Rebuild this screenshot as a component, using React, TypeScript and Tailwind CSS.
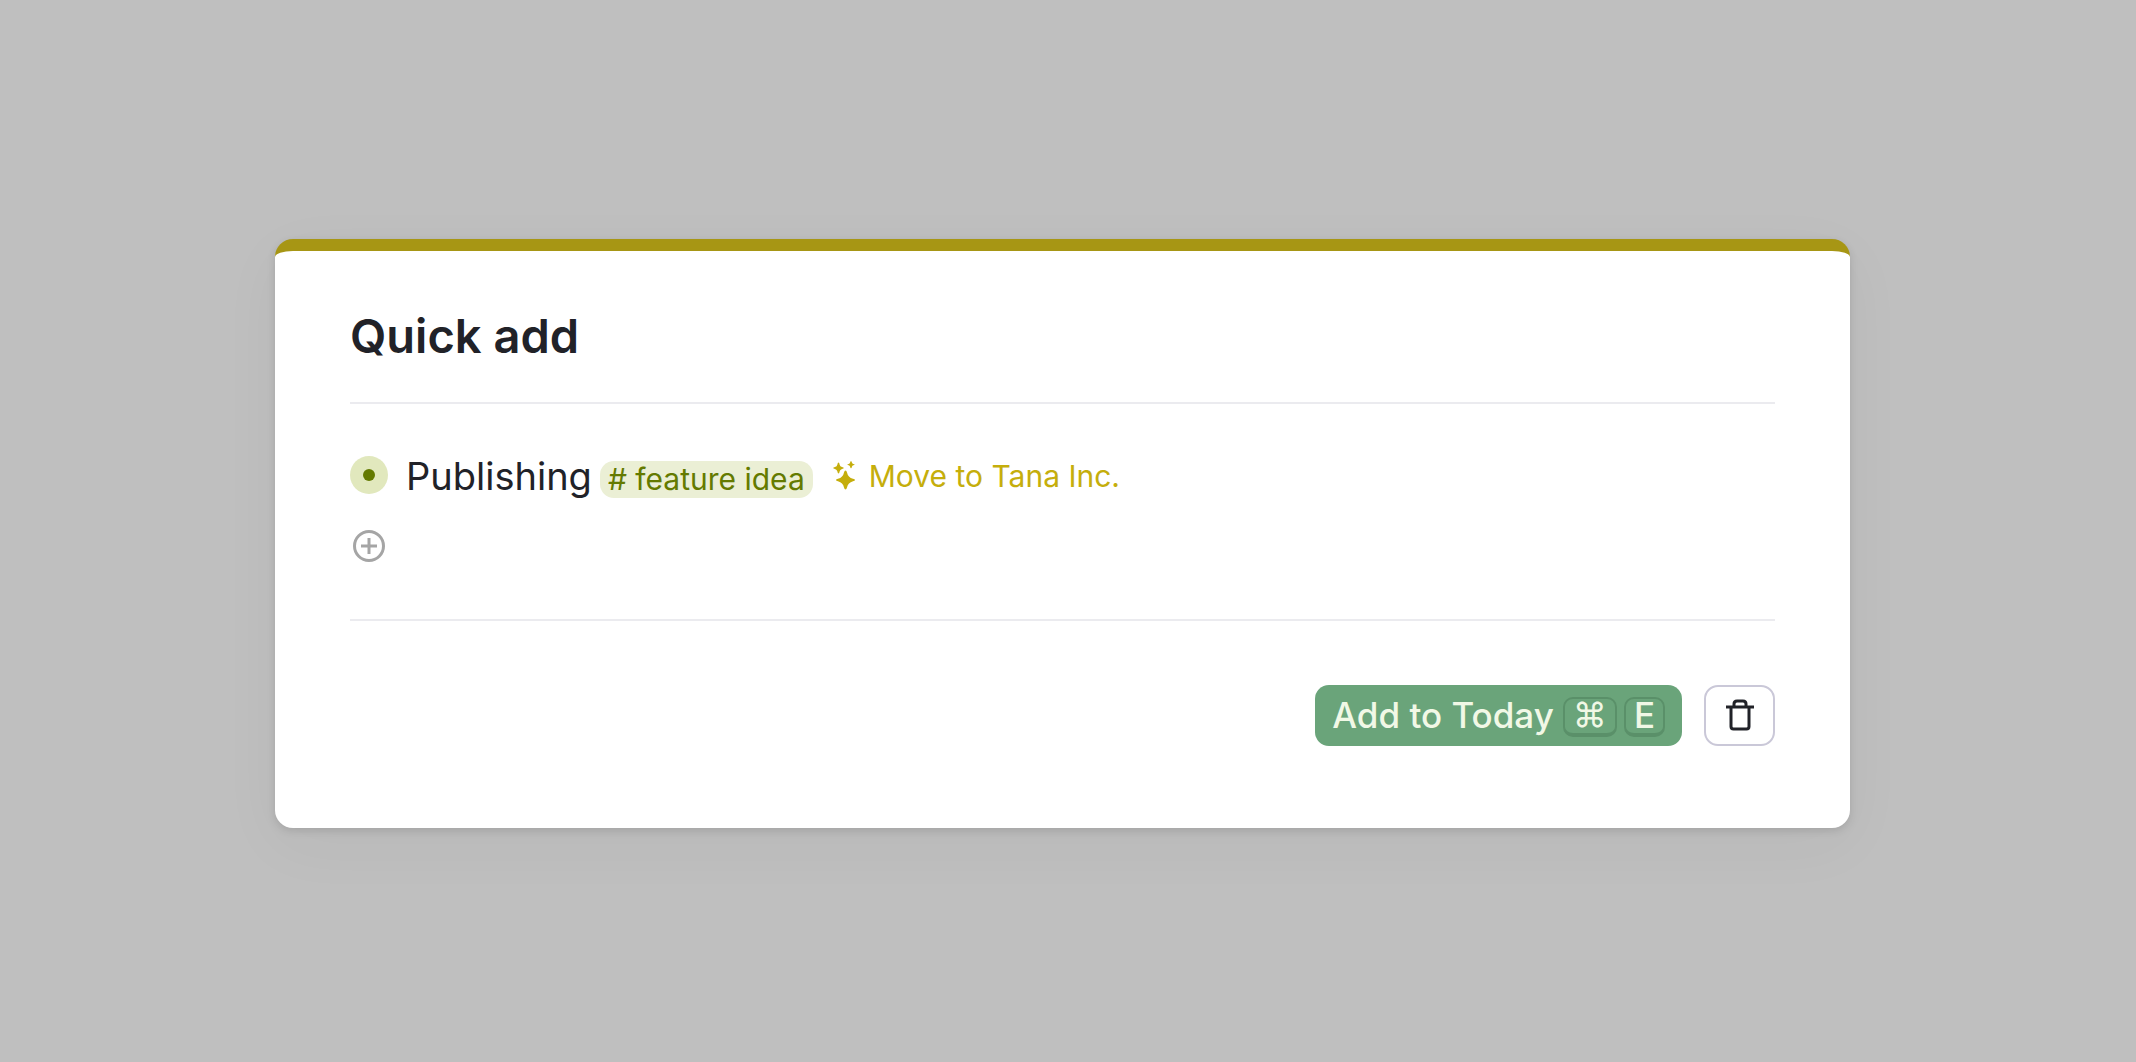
import React from "react";

function SparklesIcon() {
  return (
    <svg width="24" height="30" viewBox="0 0 24 30" fill="currentColor" aria-hidden="true">
      <path d="M12.500 9.500Q13.500 9.500 14 11.500Q15 16.500 20 17.800Q22 18.200 22 19Q22 19.800 20 20.200Q15 21.500 14 26.500Q13.500 28.500 12.500 28.500Q11.500 28.500 11 26.500Q10 21.500 5 20.200Q3 19.800 3 19Q3 18.200 5 17.800Q10 16.500 11 11.500Q11.500 9.500 12.500 9.500Z" />
      <path d="M5.500 1.500Q6.300 1.500 6.600 3.500Q7 5.600 9 6.100Q10.800 6.400 10.800 7Q10.800 7.600 9 7.900Q7 8.400 6.600 10.500Q6.300 12.500 5.500 12.500Q4.700 12.500 4.400 10.500Q4 8.400 2 7.900Q0.200 7.600 0.200 7Q0.200 6.400 2 6.100Q4 5.600 4.400 3.500Q4.700 1.500 5.500 1.500Z" />
      <path d="M18 0Q18.600 0 18.900 1.500Q19.200 2.600 20.300 2.900Q21.600 3.200 21.600 3.600Q21.600 4 20.300 4.300Q19.200 4.600 18.900 5.700Q18.600 7.200 18 7.200Q17.400 7.200 17.100 5.700Q16.800 4.600 15.700 4.300Q14.400 4 14.400 3.600Q14.400 3.200 15.700 2.900Q16.800 2.600 17.100 1.500Q17.400 0 18 0Z" />
    </svg>
  );
}

function TrashIcon() {
  return (
    <svg width="28" height="32" viewBox="0 0 28 32" fill="none" stroke="currentColor" strokeWidth="3" aria-hidden="true">
      <path d="M0 8H28" />
      <path d="M8 8V5Q8 2 11 2H17Q20 2 20 5V8" />
      <path d="M5 8V27.500Q5 30 7.500 30H20.500Q23 30 23 27.500V8" />
    </svg>
  );
}

function Key({ children }: { children: React.ReactNode }) {
  return (
    <kbd className="mt-1 flex h-10 items-center justify-center rounded-[10px] border-2 border-b-4 border-[#5a9069] px-2 pb-0.5 font-['Inter',sans-serif] leading-9">
      {children}
    </kbd>
  );
}

export default function App() {
  return (
    <div className="min-h-screen bg-[#bfbfbf] pt-[239px] pr-[286px] pb-16 pl-[275px] font-['Inter',sans-serif] text-[#212228]">
      <main className="rounded-[18px] border-t-[12px] border-[#a79614] bg-white px-[75px] pt-14 pb-[82px] shadow-[0_3px_8px_rgba(0,0,0,0.12),0_16px_64px_rgba(0,0,0,0.04)]">
        <h1 className="border-b-2 border-[#ebebef] pb-[37px] text-[47px] leading-[58px] font-semibold">Quick add</h1>

        <ul className="flex flex-col gap-[27px] border-b-2 border-[#ebebef] pt-12 pb-[54px]">
          <li className="flex h-12 items-center">
            <button aria-label="Open node" className="mb-0.5 flex size-[38px] items-center justify-center rounded-full bg-[#e1e8bd]">
              <span className="size-3 rounded-full bg-[#647a00]" />
            </button>
            <div className="ml-[18px] flex items-baseline gap-2">
              <span className="text-[38px] leading-[48px]">Publishing</span>
              <a href="#feature-idea" className="rounded-[14px] bg-[#ebefd5] px-2 text-3xl leading-[37px] text-[#647a00]">
                # feature idea
              </a>
            </div>
            <button className="ml-5 flex items-center gap-3 text-3xl leading-9 text-[#c5ae0c]">
              <SparklesIcon />
              Move to Tana Inc.
            </button>
          </li>
          <li className="flex h-[38px] items-center">
            <button aria-label="Add node" className="flex size-[38px] items-center justify-center text-[#a5a5a5]">
              <svg width="32" height="32" viewBox="0 0 32 32" fill="none" stroke="currentColor" strokeWidth="3" aria-hidden="true">
                <circle cx="16" cy="16" r="14.500" />
                <path d="M16 8V24M8 16H24" />
              </svg>
            </button>
          </li>
        </ul>

        <footer className="mt-[64px] flex justify-end gap-[22px]">
          <button className="flex h-[61px] items-center gap-[7px] rounded-[14px] bg-[#6aa47a] px-[17px] pb-0.5 text-[35px] leading-[48px] font-medium text-[#f1f8e6]">
            <span className="mr-0.5">Add to Today</span>
            <Key>
              <span className="text-[34px] font-normal">⌘</span>
            </Key>
            <Key>E</Key>
          </button>
          <button aria-label="Delete" className="flex h-[61px] w-[71px] items-center justify-center rounded-[14px] border-2 border-[#cac8d8] pb-0.5">
            <TrashIcon />
          </button>
        </footer>
      </main>
    </div>
  );
}
